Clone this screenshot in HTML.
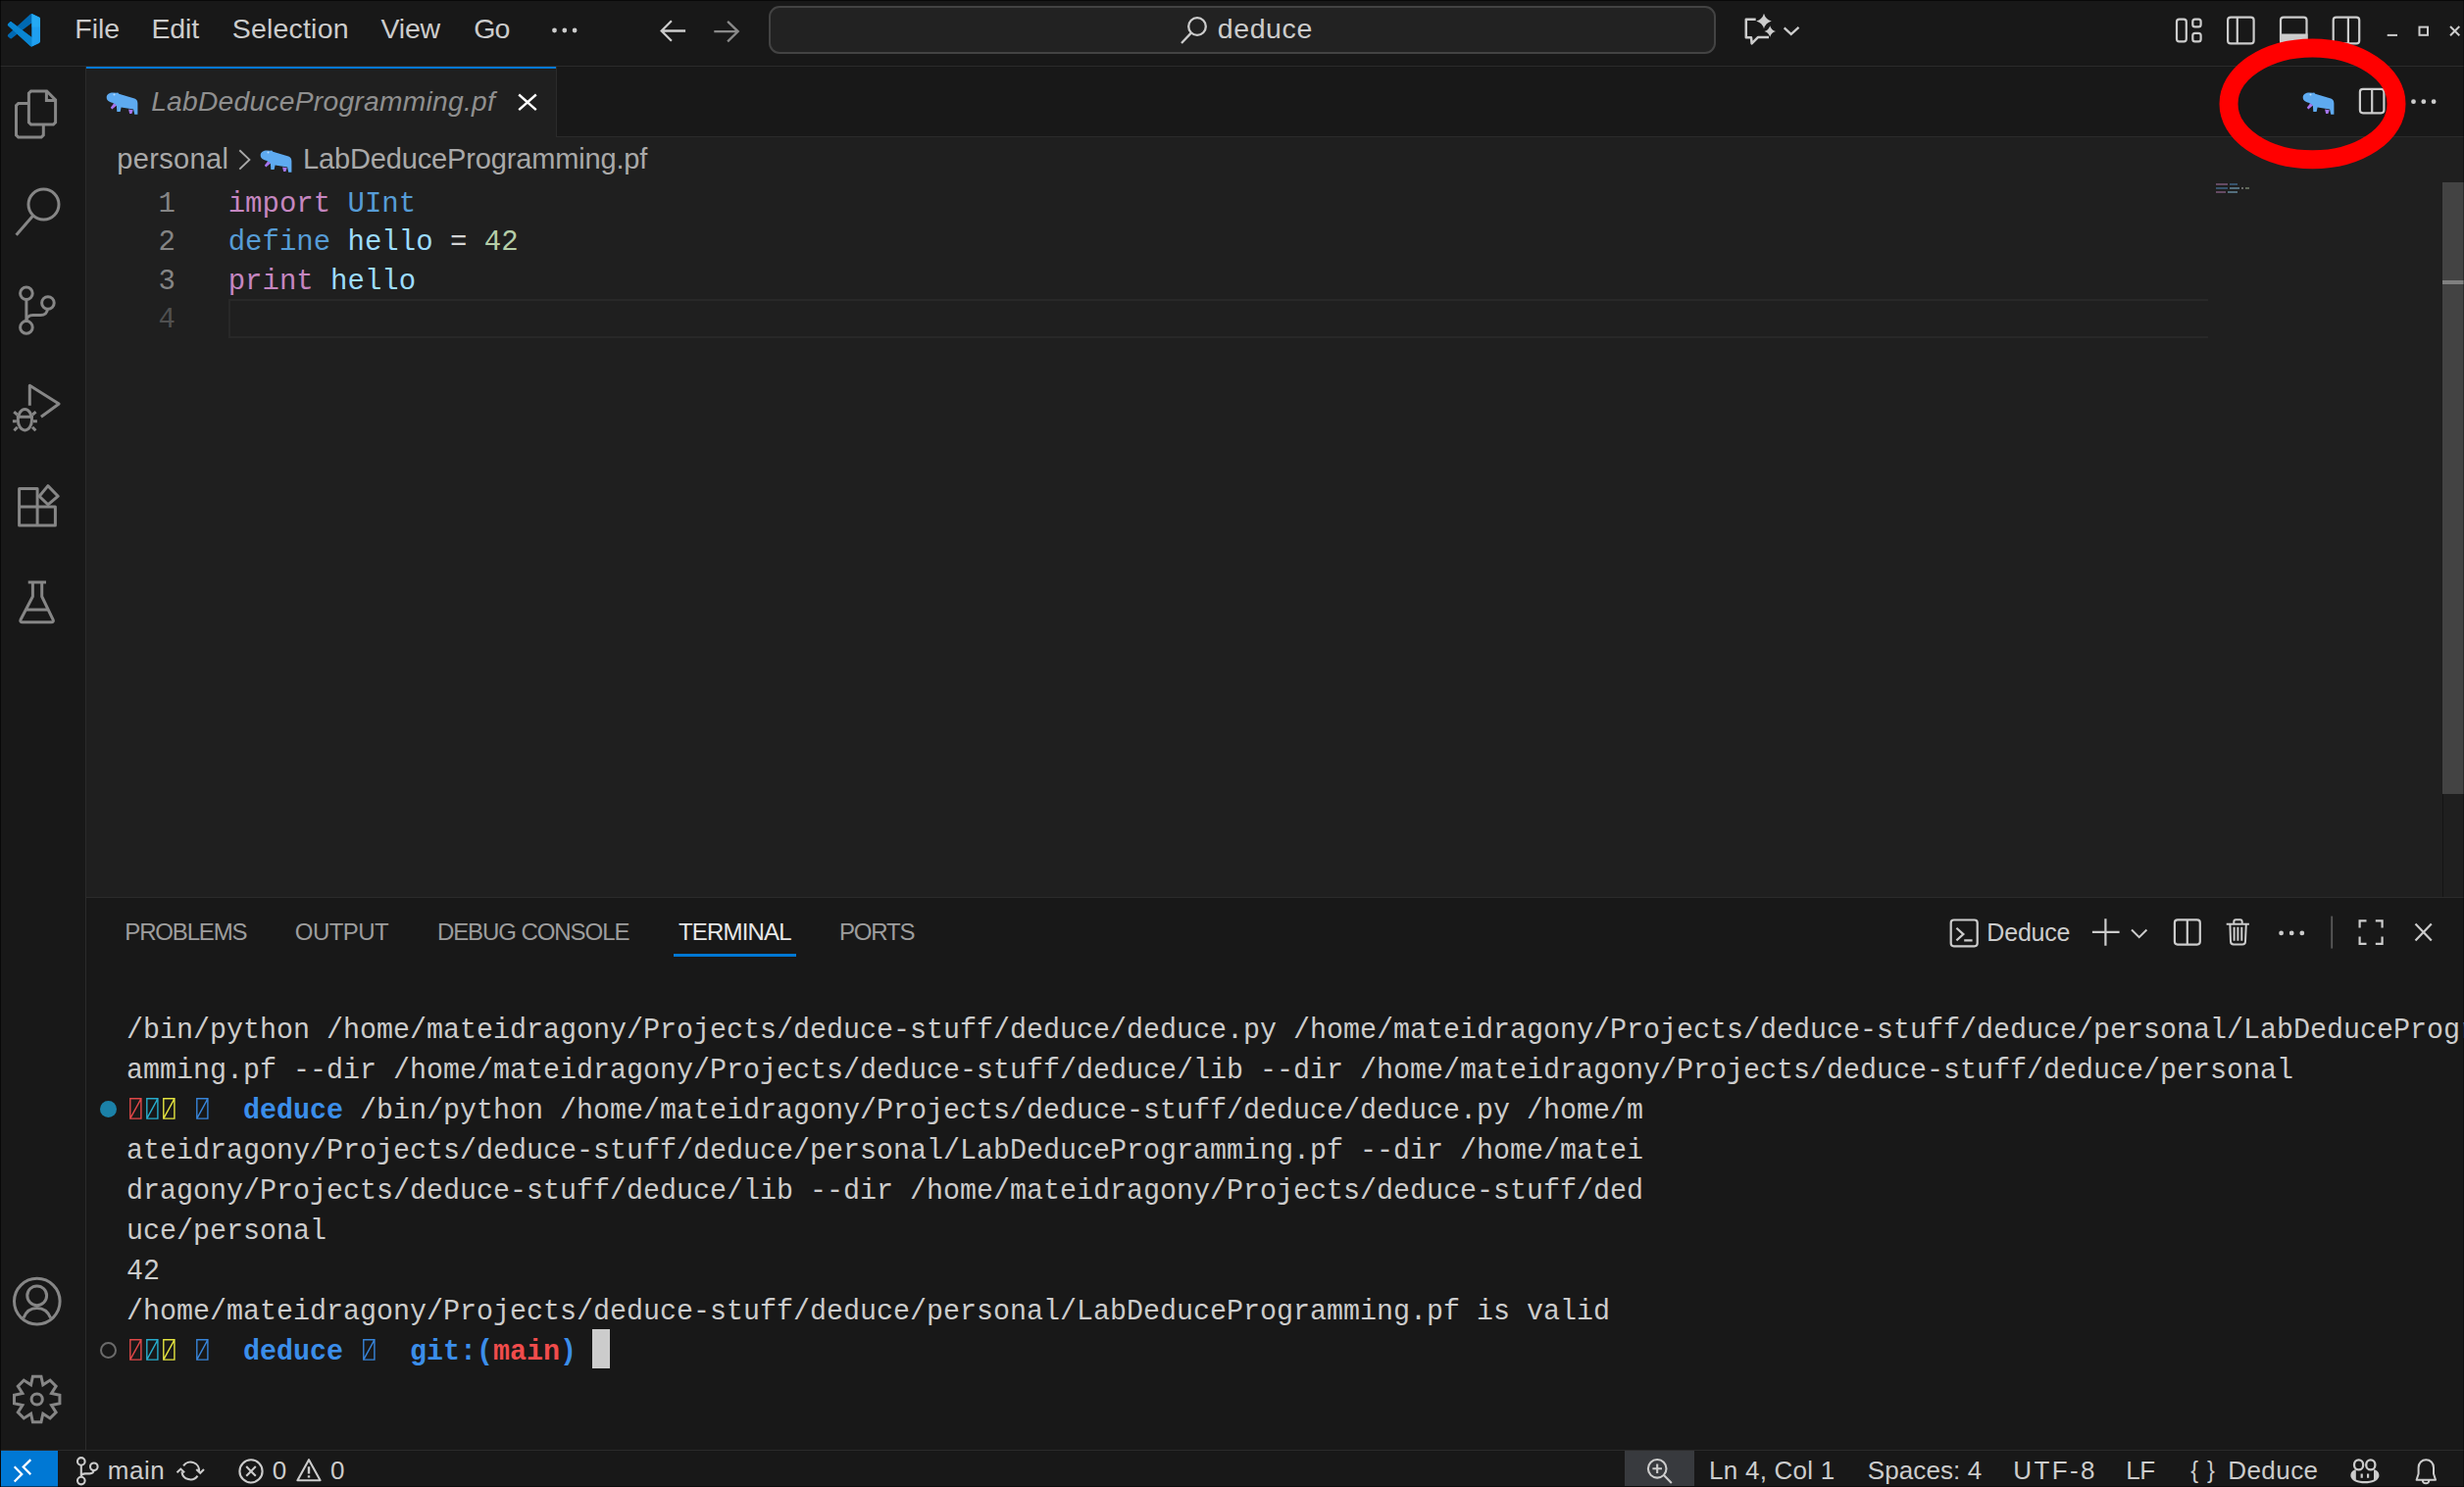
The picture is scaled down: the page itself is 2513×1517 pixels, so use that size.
<!DOCTYPE html>
<html><head><meta charset="utf-8"><title>VS Code</title>
<style>
html,body{margin:0;padding:0;width:2513px;height:1517px;overflow:hidden;background:#181818}
body{position:relative}
.t{position:absolute;white-space:pre;font-family:"Liberation Sans", sans-serif}
.m{font-family:"Liberation Mono", monospace}
.b{position:absolute}
.s{position:absolute;overflow:visible}
</style></head><body>
<div class="b" style="left:0px;top:0px;width:2513px;height:1517px;background:#181818"></div>
<div class="b" style="left:88px;top:139px;width:2425px;height:777px;background:#1f1f1f"></div>
<div class="b" style="left:0px;top:67px;width:2513px;height:1px;background:#2b2b2b"></div>
<div class="b" style="left:87px;top:68px;width:1px;height:1412px;background:#2b2b2b"></div>
<div class="b" style="left:567px;top:139px;width:1946px;height:1px;background:#2b2b2b"></div>
<div class="b" style="left:88px;top:68px;width:479px;height:72px;background:#1f1f1f"></div>
<div class="b" style="left:88px;top:68px;width:479px;height:2px;background:#0078d4"></div>
<div class="b" style="left:567px;top:68px;width:1px;height:71px;background:#2b2b2b"></div>
<div class="b" style="left:88px;top:915px;width:2425px;height:1px;background:#2b2b2b"></div>
<div class="b" style="left:0px;top:1479px;width:2513px;height:1px;background:#2b2b2b"></div>
<svg class="s" style="left:0px;top:8px" width="50" height="48" viewBox="0 8 50 48"><g transform="translate(7.8 14) scale(0.332 0.335)"><path fill="#0069b3" d="M96.5 10.8 75.9.9c-2.4-1.2-5.2-.7-7.1 1.2L29.4 38 12.2 25c-1.6-1.2-3.8-1.1-5.3.2L1.4 30.3c-1.8 1.7-1.8 4.5 0 6.2L16.3 50 1.4 63.6c-1.8 1.7-1.8 4.5 0 6.2l5.5 5c1.5 1.4 3.7 1.5 5.3.2l17.2-13 39.4 35.9c1.9 1.9 4.7 2.4 7.1 1.2l20.6-9.9c2.2-1 3.5-3.2 3.5-5.6V16.4c0-2.4-1.4-4.6-3.5-5.6zM75 72.7 45.1 50 75 27.3v45.4z"/><path fill="#0a86d2" d="M1.4 30.3c-1.8 1.7-1.8 4.5 0 6.2L68.8 97.9c1.9 1.9 4.7 2.4 7.1 1.2L75 72.7 12.2 25c-1.6-1.2-3.8-1.1-5.3.2Z"/><path fill="#1f9ff0" d="M74 .6 75.9.9 96.5 10.8c2.2 1 3.5 3.2 3.5 5.6v67.2c0 2.4-1.4 4.6-3.5 5.6L75.9 99.1 74 99.5Z"/><path fill="#29b3f5" d="M74 .6 75.9.9 96.5 10.8c2.2 1 3.5 3.2 3.5 5.6V40L74 40Z" opacity=".5"/></g></svg>
<div class="t" style="left:76.26px;top:13.80px;font-size:28.5px;line-height:31.84px;color:#cccccc;letter-spacing:-0.006px;">File</div>
<div class="t" style="left:154.56px;top:13.80px;font-size:28.5px;line-height:31.84px;color:#cccccc;letter-spacing:-0.188px;">Edit</div>
<div class="t" style="left:236.71px;top:13.80px;font-size:28.5px;line-height:31.84px;color:#cccccc;letter-spacing:0.2px;">Selection</div>
<div class="t" style="left:388.57px;top:13.80px;font-size:28.5px;line-height:31.84px;color:#cccccc;letter-spacing:-0.239px;">View</div>
<div class="t" style="left:483.27px;top:13.80px;font-size:28.5px;line-height:31.84px;color:#cccccc;letter-spacing:-0.988px;">Go</div>
<svg class="s" style="left:555px;top:22px" width="45" height="18" viewBox="555 22 45 18"><circle cx="565.5" cy="31" r="2.4" fill="#cccccc"/><circle cx="575.8" cy="31" r="2.4" fill="#cccccc"/><circle cx="586.1" cy="31" r="2.4" fill="#cccccc"/></svg>
<svg class="s" style="left:665px;top:12px" width="100" height="40" viewBox="665 12 100 40"><path d="M674.7 31.5H699.1M684.9 21.3 674.7 31.5 684.9 41.7" stroke="#cccccc" stroke-width="2.3" fill="none" /><path d="M728.3 32.1H752.7M742.1 21.9 752.7 32.1 742.1 42.3" stroke="#8a8a8a" stroke-width="2.3" fill="none" /></svg>
<div class="b" style="left:784px;top:6px;width:966px;height:49px;background:#222222;border:2px solid #434343;border-radius:11px;box-sizing:border-box"></div>
<svg class="s" style="left:1195px;top:10px" width="45" height="42" viewBox="1195 10 45 42"><circle cx="1221" cy="27" r="8.8" stroke="#cccccc" stroke-width="2.3" fill="none"/><path d="M1214.8 33.6 1205 44" stroke="#cccccc" stroke-width="2.3" fill="none" /></svg>
<div class="t" style="left:1241.80px;top:14.00px;font-size:28.5px;line-height:31.84px;color:#cccccc;letter-spacing:0.592px;">deduce</div>
<svg class="s" style="left:1770px;top:8px" width="70" height="44" viewBox="1770 8 70 44"><path d="M1790.7 19.7H1780.8V38.2H1786L1786.6 44.4 1793.1 37.9H1804" stroke="#cccccc" stroke-width="2.5" fill="none" stroke-linejoin="round"/><path d="M1799 13.7Q1800.716 19.784 1806.8 21.5Q1800.716 23.216 1799 29.3Q1797.284 23.216 1791.2 21.5Q1797.284 19.784 1799 13.7Z" fill="#cccccc"/><path d="M1805.2 26.2Q1806.476 30.724 1811.0 32Q1806.476 33.276 1805.2 37.8Q1803.924 33.276 1799.4 32Q1803.924 30.724 1805.2 26.2Z" fill="#cccccc"/><path d="M1819.7 28.4 1826.7 34.9 1834.5 27.8" stroke="#cccccc" stroke-width="2.3" fill="none" /></svg>
<svg class="s" style="left:2210px;top:10px" width="210" height="42" viewBox="2210 10 210 42"><rect x="2220" y="19.6" width="9.8" height="22.8" rx="2.6" stroke="#cccccc" stroke-width="2.2" fill="none"/><rect x="2236.3" y="19.6" width="8.3" height="7.8" rx="2.4" stroke="#cccccc" stroke-width="2.2" fill="none"/><rect x="2236.3" y="33.8" width="8.3" height="8.6" rx="2.4" stroke="#cccccc" stroke-width="2.2" fill="none"/><rect x="2272.1" y="17.6" width="26.5" height="26.8" rx="3" stroke="#cccccc" stroke-width="2.2" fill="none"/><path d="M2281.8 17.6V44.4" stroke="#cccccc" stroke-width="2.2" fill="none" /><rect x="2326" y="17.6" width="26.5" height="26.8" rx="3" stroke="#cccccc" stroke-width="2.2" fill="none"/><path d="M2325 34.5H2353.5V42.4a3 3 0 0 1-3 3H2328a3 3 0 0 1-3-3Z" fill="#cccccc"/><rect x="2379.7" y="17.6" width="26.5" height="26.8" rx="3" stroke="#cccccc" stroke-width="2.2" fill="none"/><path d="M2394.9 17.6V44.4" stroke="#cccccc" stroke-width="2.2" fill="none" /></svg>
<svg class="s" style="left:2425px;top:15px" width="88" height="30" viewBox="2425 15 88 30"><path d="M2434.7 35.9H2445" stroke="#cccccc" stroke-width="2" fill="none" /><rect x="2467.5" y="27.6" width="8.5" height="8.2" stroke="#cccccc" stroke-width="2" fill="none"/><path d="M2499 27 2508.3 36.3M2508.3 27 2499 36.3" stroke="#cccccc" stroke-width="2" fill="none" /></svg>
<svg class="s" style="left:0px;top:80px" width="87" height="70" viewBox="0 80 87 70"><path d="M29.4 103.9V95.2L31.6 92.9H47.7L56.6 101.9V124.9L54.4 127.1H31.6L29.4 124.9V103.9" stroke="#868686" stroke-width="3.0" fill="none" stroke-linejoin="miter"/><path d="M47.4 93V102.5H56.6" stroke="#868686" stroke-width="3.0" fill="none" /><path d="M29.4 105.4H18.7L16.5 107.6V137.9L18.7 140.1H42.1L44.3 137.9V127.1" stroke="#868686" stroke-width="3.0" fill="none" /></svg>
<svg class="s" style="left:0px;top:180px" width="87" height="70" viewBox="0 180 87 70"><circle cx="44.5" cy="208.6" r="15.5" stroke="#868686" stroke-width="3.0" fill="none"/><path d="M33.5 220.2 16.6 239.7" stroke="#868686" stroke-width="3.0" fill="none" /></svg>
<svg class="s" style="left:0px;top:280px" width="87" height="70" viewBox="0 280 87 70"><circle cx="26.9" cy="299.3" r="6.3" stroke="#868686" stroke-width="3.0" fill="none"/><circle cx="26.9" cy="333.9" r="6.3" stroke="#868686" stroke-width="3.0" fill="none"/><circle cx="48.9" cy="309" r="6.3" stroke="#868686" stroke-width="3.0" fill="none"/><path d="M26.9 305.6V327.6" stroke="#868686" stroke-width="3.0" fill="none" /><path d="M48.4 315.3C48.4 319 45.5 321.5 41.5 321.5H33.5C29.5 321.5 26.9 323.8 26.9 327.2" stroke="#868686" stroke-width="3.0" fill="none" /></svg>
<svg class="s" style="left:0px;top:380px" width="87" height="70" viewBox="0 380 87 70"><path d="M30.3 413.7V393.2L60.1 412 41.9 425.3" stroke="#868686" stroke-width="3.0" fill="none" stroke-linejoin="round"/><ellipse cx="25.4" cy="428.2" rx="7.1" ry="10.7" stroke="#868686" stroke-width="3.0" fill="none"/><path d="M16.8 425.3H34M14.2 420.2 17.6 423M36.6 420.2 33.2 423M12.9 429.8H16.8M34 429.8H37.9M14.4 439.3 17.8 435.7M36.4 439.3 33 435.7" stroke="#868686" stroke-width="3.0" fill="none" /></svg>
<svg class="s" style="left:0px;top:480px" width="87" height="70" viewBox="0 480 87 70"><path d="M19.6 498.4H38.1V517.1H19.6ZM19.6 517.1V535.9H56.4V517.1H38.1V535.9" stroke="#868686" stroke-width="3.0" fill="none" stroke-linejoin="round"/><path d="M48.9 495.6 59.2 506.2 48.9 514.8 40.1 506.2Z" stroke="#868686" stroke-width="3.0" fill="none" stroke-linejoin="round"/></svg>
<svg class="s" style="left:0px;top:580px" width="87" height="70" viewBox="0 580 87 70"><path d="M28.7 594.1H47M33.4 594.1V608.5L21 632.3C20.3 633.8 21.2 634.8 22.8 634.8H52.4C54 634.8 54.9 633.8 54.2 632.3L42.7 608.5V594.1M26.2 622.1H49.5" stroke="#868686" stroke-width="3.0" fill="none" stroke-linejoin="round"/></svg>
<svg class="s" style="left:0px;top:1290px" width="87" height="70" viewBox="0 1290 87 70"><circle cx="37.8" cy="1327.6" r="23.3" stroke="#868686" stroke-width="3.0" fill="none"/><circle cx="37.7" cy="1321.8" r="9.9" stroke="#868686" stroke-width="3.0" fill="none"/><path d="M24 1344.5C26.5 1338 31 1334.5 37.7 1334.5S49 1338 51.6 1344.5" stroke="#868686" stroke-width="3.0" fill="none" /></svg>
<svg class="s" style="left:0px;top:1395px" width="87" height="67" viewBox="0 1395 87 67"><polygon points="31.58,1412.72 33.44,1404.29 41.96,1404.29 43.82,1412.72 51.10,1408.07 57.13,1414.10 52.48,1421.38 60.91,1423.24 60.91,1431.76 52.48,1433.62 57.13,1440.90 51.10,1446.93 43.82,1442.28 41.96,1450.71 33.44,1450.71 31.58,1442.28 24.30,1446.93 18.27,1440.90 22.92,1433.62 14.49,1431.76 14.49,1423.24 22.92,1421.38 18.27,1414.10 24.30,1408.07" stroke="#868686" stroke-width="3.0" fill="none" stroke-linejoin="miter"/><circle cx="37.7" cy="1427.5" r="5.6" stroke="#868686" stroke-width="3.0" fill="none"/></svg>
<svg class="s" style="left:103.5px;top:90px" width="40" height="30" viewBox="0 0 40 30"><path d="M4.7 9.5C4.7 6.2 7.6 4.6 11.2 4.6L15.3 4.8 16 4.3 17.3 5.8 33.2 10.6C35.3 11.2 36.4 13 36.4 15.5V26.8H33.2L32.1 21.6 19.6 19.4 18.6 24.1H15.3L14.9 18.3C13.6 16.6 12.5 15.9 10.5 14.8 7.5 13.8 4.7 12.5 4.7 9.5Z" fill="#5eaaf0"/><path d="M12.1 15.4 15 17.5 10.3 21.6 8.8 19.7Z" fill="#a674ef"/><path d="M27.1 21.6 31.8 22.3 30.4 25.9 28.2 25.9Z" fill="#a674ef"/><circle cx="12.5" cy="6.6" r="1" fill="#b8dcff"/></svg>
<div class="t" style="left:154.13px;top:87.67px;font-size:28.2px;line-height:31.51px;color:#8f8f8f;font-style:italic;letter-spacing:0.271px;">LabDeduceProgramming.pf</div>
<svg class="s" style="left:520px;top:88px" width="36" height="32" viewBox="520 88 36 32"><path d="M529.2 96.5 546.8 112.2M546.8 96.5 529.2 112.2" stroke="#ffffff" stroke-width="2.4" fill="none" /></svg>
<svg class="s" style="left:2343.5px;top:90px" width="40" height="30" viewBox="0 0 40 30"><path d="M4.7 9.5C4.7 6.2 7.6 4.6 11.2 4.6L15.3 4.8 16 4.3 17.3 5.8 33.2 10.6C35.3 11.2 36.4 13 36.4 15.5V26.8H33.2L32.1 21.6 19.6 19.4 18.6 24.1H15.3L14.9 18.3C13.6 16.6 12.5 15.9 10.5 14.8 7.5 13.8 4.7 12.5 4.7 9.5Z" fill="#5eaaf0"/><path d="M12.1 15.4 15 17.5 10.3 21.6 8.8 19.7Z" fill="#a674ef"/><path d="M27.1 21.6 31.8 22.3 30.4 25.9 28.2 25.9Z" fill="#a674ef"/><circle cx="12.5" cy="6.6" r="1" fill="#b8dcff"/></svg>
<svg class="s" style="left:2395px;top:82px" width="50" height="43" viewBox="2395 82 50 43"><rect x="2406.9" y="90.8" width="24.5" height="24.5" rx="3" stroke="#cccccc" stroke-width="2.2" fill="none"/><path d="M2419.2 90.8V115.3" stroke="#cccccc" stroke-width="2.2" fill="none" /></svg>
<svg class="s" style="left:2450px;top:95px" width="45" height="20" viewBox="2450 95 45 20"><circle cx="2461.5" cy="103.7" r="2.4" fill="#cccccc"/><circle cx="2471.8" cy="103.7" r="2.4" fill="#cccccc"/><circle cx="2482.1" cy="103.7" r="2.4" fill="#cccccc"/></svg>
<div class="t" style="left:119.33px;top:146.25px;font-size:29px;line-height:32.40px;color:#a9a9a9;letter-spacing:0.324px;">personal</div>
<svg class="s" style="left:236px;top:148px" width="26" height="32" viewBox="236 148 26 32"><path d="M244.3 153.2 254.4 162.9 244.3 172.6" stroke="#a9a9a9" stroke-width="1.9" fill="none" /></svg>
<svg class="s" style="left:260.5px;top:149px" width="40" height="30" viewBox="0 0 40 30"><path d="M4.7 9.5C4.7 6.2 7.6 4.6 11.2 4.6L15.3 4.8 16 4.3 17.3 5.8 33.2 10.6C35.3 11.2 36.4 13 36.4 15.5V26.8H33.2L32.1 21.6 19.6 19.4 18.6 24.1H15.3L14.9 18.3C13.6 16.6 12.5 15.9 10.5 14.8 7.5 13.8 4.7 12.5 4.7 9.5Z" fill="#5eaaf0"/><path d="M12.1 15.4 15 17.5 10.3 21.6 8.8 19.7Z" fill="#a674ef"/><path d="M27.1 21.6 31.8 22.3 30.4 25.9 28.2 25.9Z" fill="#a674ef"/><circle cx="12.5" cy="6.6" r="1" fill="#b8dcff"/></svg>
<div class="t" style="left:309.02px;top:146.25px;font-size:29px;line-height:32.40px;color:#a9a9a9;letter-spacing:-0.15px;">LabDeduceProgramming.pf</div>
<div class="t m" style="left:139px;width:40px;text-align:right;top:193.06px;font-size:29px;line-height:32.85px;color:#858585">1</div>
<div class="t m" style="left:139px;width:40px;text-align:right;top:232.36px;font-size:29px;line-height:32.85px;color:#858585">2</div>
<div class="t m" style="left:139px;width:40px;text-align:right;top:271.66px;font-size:29px;line-height:32.85px;color:#858585">3</div>
<div class="t m" style="left:139px;width:40px;text-align:right;top:310.96px;font-size:29px;line-height:32.85px;color:#505050">4</div>
<div class="b" style="left:233px;top:304.5px;width:2019px;height:40px;border:2px solid #282828;border-right:none;box-sizing:border-box"></div>
<div class="t m" style="left:232.70px;top:192.96px;font-size:29px;line-height:32.85px;color:#cccccc;"><span style="color:#c586c0">import</span> <span style="color:#569cd6">UInt</span></div>
<div class="t m" style="left:232.70px;top:232.26px;font-size:29px;line-height:32.85px;color:#cccccc;"><span style="color:#569cd6">define</span> <span style="color:#9cdcfe">hello</span> <span style="color:#d4d4d4">=</span> <span style="color:#b5cea8">42</span></div>
<div class="t m" style="left:232.70px;top:271.56px;font-size:29px;line-height:32.85px;color:#cccccc;"><span style="color:#c586c0">print</span> <span style="color:#9cdcfe">hello</span></div>
<div class="b" style="left:2260.0px;top:186.6px;width:11.7px;height:2.8px;background:#c586c0;opacity:.42"></div>
<div class="b" style="left:2273.9px;top:186.6px;width:7.8px;height:2.8px;background:#569cd6;opacity:.42"></div>
<div class="b" style="left:2260.0px;top:190.6px;width:11.7px;height:2.8px;background:#569cd6;opacity:.42"></div>
<div class="b" style="left:2273.9px;top:190.6px;width:9.9px;height:2.8px;background:#9cdcfe;opacity:.42"></div>
<div class="b" style="left:2285.8px;top:190.6px;width:1.9px;height:2.8px;background:#d4d4d4;opacity:.42"></div>
<div class="b" style="left:2289.9px;top:190.6px;width:3.9px;height:2.8px;background:#b5cea8;opacity:.42"></div>
<div class="b" style="left:2260.0px;top:194.6px;width:10.2px;height:2.8px;background:#c586c0;opacity:.42"></div>
<div class="b" style="left:2271.9px;top:194.6px;width:10.0px;height:2.8px;background:#9cdcfe;opacity:.42"></div>
<div class="b" style="left:2491px;top:186px;width:22px;height:624px;background:#434343"></div>
<div class="b" style="left:2491px;top:286px;width:22px;height:3.5px;background:#808080"></div>
<div class="b" style="left:2491px;top:810px;width:1px;height:105px;background:#141414"></div>
<div class="t" style="left:127.33px;top:937.87px;font-size:24px;line-height:26.81px;color:#9d9d9d;letter-spacing:-1.172px;">PROBLEMS</div>
<div class="t" style="left:300.86px;top:937.87px;font-size:24px;line-height:26.81px;color:#9d9d9d;letter-spacing:-0.595px;">OUTPUT</div>
<div class="t" style="left:445.93px;top:937.87px;font-size:24px;line-height:26.81px;color:#9d9d9d;letter-spacing:-1.073px;">DEBUG CONSOLE</div>
<div class="t" style="left:691.96px;top:937.87px;font-size:24px;line-height:26.81px;color:#e7e7e7;letter-spacing:-0.816px;">TERMINAL</div>
<div class="t" style="left:855.93px;top:937.87px;font-size:24px;line-height:26.81px;color:#9d9d9d;letter-spacing:-1.151px;">PORTS</div>
<div class="b" style="left:687px;top:973px;width:125px;height:3px;background:#0078d4"></div>
<svg class="s" style="left:1980px;top:930px" width="520" height="42" viewBox="1980 930 520 42"><rect x="1989.7" y="938.5" width="27" height="26.8" rx="3" stroke="#cccccc" stroke-width="2.2" fill="none"/><path d="M1995.4 946.7 2002.4 953.1 1995.4 959.4M2003.2 959.4H2011.6" stroke="#cccccc" stroke-width="2.2" fill="none" /><path d="M2147.4 937.3V964.7M2133.9 950.8H2161.6" stroke="#cccccc" stroke-width="2.2" fill="none" /><path d="M2174 948.5 2181.7 956.2 2189.4 948.5" stroke="#cccccc" stroke-width="2.0" fill="none" /><rect x="2217.9" y="938.4" width="25.9" height="25.2" rx="3" stroke="#cccccc" stroke-width="2.2" fill="none"/><path d="M2230.8 938.4V963.6" stroke="#cccccc" stroke-width="2.2" fill="none" /><path d="M2270.7 942.7H2293.9M2278.3 942.7V940.2C2278.3 938.9 2279.1 938.3 2280.3 938.3H2284.7C2285.9 938.3 2286.7 938.9 2286.7 940.2V942.7M2274.4 942.7 2275 960.6C2275.1 962.5 2276.2 963.4 2278 963.4H2287C2288.8 963.4 2289.9 962.5 2290 960.6L2290.8 942.7M2278.6 945.8V959.7M2282.4 945.8V959.7M2286.3 945.8V959.7" stroke="#cccccc" stroke-width="2.0" fill="none" /><circle cx="2326.6" cy="951.9" r="2.4" fill="#cccccc"/><circle cx="2337.2" cy="951.9" r="2.4" fill="#cccccc"/><circle cx="2347.8" cy="951.9" r="2.4" fill="#cccccc"/><path d="M2378.2 934.6V967.6" stroke="#5a5a5a" stroke-width="1.8" fill="none" /><path d="M2406.6 946.5V939.3H2413.5M2422.8 939.3H2429.6V946.5M2429.6 955.6V962.8H2422.8M2413.5 962.8H2406.6V955.6" stroke="#cccccc" stroke-width="2.2" fill="none" /><path d="M2463.5 942.5 2479.8 959.4M2479.8 942.5 2463.5 959.4" stroke="#cccccc" stroke-width="2.2" fill="none" /></svg>
<div class="t" style="left:2026.35px;top:938.17px;font-size:25px;line-height:27.93px;color:#cccccc;letter-spacing:-0.202px;">Deduce</div>
<div class="t m" style="left:129.00px;top:1035.51px;font-size:28.337px;line-height:32.10px;color:#cccccc;transform:scaleY(1.06);transform-origin:0 23.59px;">/bin/python /home/mateidragony/Projects/deduce-stuff/deduce/deduce.py /home/mateidragony/Projects/deduce-stuff/deduce/personal/LabDeduceProgramming.pf</div>
<div class="t m" style="left:129.00px;top:1076.51px;font-size:28.337px;line-height:32.10px;color:#cccccc;transform:scaleY(1.06);transform-origin:0 23.59px;">amming.pf --dir /home/mateidragony/Projects/deduce-stuff/deduce/lib --dir /home/mateidragony/Projects/deduce-stuff/deduce/personal</div>
<div class="t m" style="left:129.00px;top:1158.51px;font-size:28.337px;line-height:32.10px;color:#cccccc;transform:scaleY(1.06);transform-origin:0 23.59px;">ateidragony/Projects/deduce-stuff/deduce/personal/LabDeduceProgramming.pf --dir /home/matei</div>
<div class="t m" style="left:129.00px;top:1199.51px;font-size:28.337px;line-height:32.10px;color:#cccccc;transform:scaleY(1.06);transform-origin:0 23.59px;">dragony/Projects/deduce-stuff/deduce/lib --dir /home/mateidragony/Projects/deduce-stuff/ded</div>
<div class="t m" style="left:129.00px;top:1240.51px;font-size:28.337px;line-height:32.10px;color:#cccccc;transform:scaleY(1.06);transform-origin:0 23.59px;">uce/personal</div>
<div class="t m" style="left:129.00px;top:1281.51px;font-size:28.337px;line-height:32.10px;color:#cccccc;transform:scaleY(1.06);transform-origin:0 23.59px;">42</div>
<div class="t m" style="left:129.00px;top:1322.51px;font-size:28.337px;line-height:32.10px;color:#cccccc;transform:scaleY(1.06);transform-origin:0 23.59px;">/home/mateidragony/Projects/deduce-stuff/deduce/personal/LabDeduceProgramming.pf is valid</div>
<div class="t m" style="left:129.00px;top:1117.51px;font-size:28.337px;line-height:32.10px;color:#cccccc;transform:scaleY(1.06);transform-origin:0 23.59px;">       <b style="color:#3b8eea">deduce</b> /bin/python /home/mateidragony/Projects/deduce-stuff/deduce/deduce.py /home/m</div>
<svg class="s" style="left:131.70px;top:1119.50px" width="13" height="22" viewBox="0 0 13 22"><path d="M.8 .8H11.9V21.1H.8ZM.8 21.1 11.9 .8" stroke="#f14c4c" stroke-width="1.4" fill="none" opacity=".92"/></svg>
<svg class="s" style="left:148.70px;top:1119.50px" width="13" height="22" viewBox="0 0 13 22"><path d="M.8 .8H11.9V21.1H.8ZM.8 21.1 11.9 .8" stroke="#29b8db" stroke-width="1.4" fill="none" opacity=".92"/></svg>
<svg class="s" style="left:165.71px;top:1119.50px" width="13" height="22" viewBox="0 0 13 22"><path d="M.8 .8H11.9V21.1H.8ZM.8 21.1 11.9 .8" stroke="#f5f543" stroke-width="1.4" fill="none" opacity=".92"/></svg>
<svg class="s" style="left:199.72px;top:1119.50px" width="13" height="22" viewBox="0 0 13 22"><path d="M.8 .8H11.9V21.1H.8ZM.8 21.1 11.9 .8" stroke="#3b8eea" stroke-width="1.4" fill="none" opacity=".92"/></svg>
<div class="b" style="left:101.6px;top:1122.5px;width:17px;height:17px;border-radius:50%;background:#1b81a8"></div>
<div class="t m" style="left:129.00px;top:1363.51px;font-size:28.337px;line-height:32.10px;color:#cccccc;transform:scaleY(1.06);transform-origin:0 23.59px;">       <b style="color:#3b8eea">deduce</b>    <b style="color:#3b8eea">git:(</b><b style="color:#f14c4c">main</b><b style="color:#3b8eea">)</b> </div>
<svg class="s" style="left:131.70px;top:1365.50px" width="13" height="22" viewBox="0 0 13 22"><path d="M.8 .8H11.9V21.1H.8ZM.8 21.1 11.9 .8" stroke="#f14c4c" stroke-width="1.4" fill="none" opacity=".92"/></svg>
<svg class="s" style="left:148.70px;top:1365.50px" width="13" height="22" viewBox="0 0 13 22"><path d="M.8 .8H11.9V21.1H.8ZM.8 21.1 11.9 .8" stroke="#29b8db" stroke-width="1.4" fill="none" opacity=".92"/></svg>
<svg class="s" style="left:165.71px;top:1365.50px" width="13" height="22" viewBox="0 0 13 22"><path d="M.8 .8H11.9V21.1H.8ZM.8 21.1 11.9 .8" stroke="#f5f543" stroke-width="1.4" fill="none" opacity=".92"/></svg>
<svg class="s" style="left:199.72px;top:1365.50px" width="13" height="22" viewBox="0 0 13 22"><path d="M.8 .8H11.9V21.1H.8ZM.8 21.1 11.9 .8" stroke="#3b8eea" stroke-width="1.4" fill="none" opacity=".92"/></svg>
<svg class="s" style="left:369.77px;top:1365.50px" width="13" height="22" viewBox="0 0 13 22"><path d="M.8 .8H11.9V21.1H.8ZM.8 21.1 11.9 .8" stroke="#3b8eea" stroke-width="1.4" fill="none" opacity=".92"/></svg>
<div class="b" style="left:102px;top:1369px;width:17px;height:17px;border-radius:50%;border:2px solid #6b6b6b;box-sizing:border-box"></div>
<div class="b" style="left:604px;top:1356px;width:18px;height:40px;background:#cccccc"></div>
<div class="b" style="left:1px;top:1480px;width:58px;height:37px;background:#0078d4"></div>
<svg class="s" style="left:0px;top:1480px" width="60" height="37" viewBox="0 1480 60 37"><path d="M14.7 1496.3 22.3 1503.9 14.7 1511.5M31.3 1489.1 23.7 1496.6 31.3 1504.1" stroke="#ffffff" stroke-width="2.2" fill="none" /></svg>
<svg class="s" style="left:60px;top:1480px" width="50" height="37" viewBox="60 1480 50 37"><circle cx="82.8" cy="1490.9" r="3.8" stroke="#cccccc" stroke-width="2.1" fill="none"/><circle cx="82.8" cy="1510.6" r="3.8" stroke="#cccccc" stroke-width="2.1" fill="none"/><circle cx="95.8" cy="1496.3" r="3.8" stroke="#cccccc" stroke-width="2.1" fill="none"/><path d="M82.8 1494.7V1506.8M95.4 1500.1C95.4 1502 94 1503.4 91.5 1503.4H87C84.5 1503.4 82.8 1504.6 82.8 1506.6" stroke="#cccccc" stroke-width="2.1" fill="none" /></svg>
<div class="t" style="left:109.87px;top:1485.96px;font-size:26px;line-height:29.05px;color:#cccccc;letter-spacing:0.487px;">main</div>
<svg class="s" style="left:170px;top:1480px" width="42" height="37" viewBox="170 1480 42 37"><path d="M187.1 1495.4A8.8 8.8 0 0 1 203.1 1501.3M201.5 1505.6A8.8 8.8 0 0 1 185.5 1501.3" stroke="#cccccc" stroke-width="2.1" fill="none" /><path d="M200.3 1499 204.2 1502.7 208 1498.9M180.5 1502.3 184.3 1498.6 188.1 1502.3" stroke="#cccccc" stroke-width="2.1" fill="none" /></svg>
<svg class="s" style="left:230px;top:1480px" width="45" height="37" viewBox="230 1480 45 37"><circle cx="256" cy="1500.9" r="11.6" stroke="#cccccc" stroke-width="2.1" fill="none"/><path d="M251.2 1496.1 260.8 1505.7M260.8 1496.1 251.2 1505.7" stroke="#cccccc" stroke-width="2.1" fill="none" /></svg>
<div class="t" style="left:277.68px;top:1485.96px;font-size:26px;line-height:29.05px;color:#cccccc;letter-spacing:0px;">0</div>
<svg class="s" style="left:295px;top:1480px" width="40" height="37" viewBox="295 1480 40 37"><path d="M315 1489.2 326.6 1510.2H303.4Z" stroke="#cccccc" stroke-width="2.1" fill="none" stroke-linejoin="round"/><path d="M315 1496.2V1503.4M315 1505.3V1507.6" stroke="#cccccc" stroke-width="2.4" fill="none" /></svg>
<div class="t" style="left:336.98px;top:1485.96px;font-size:26px;line-height:29.05px;color:#cccccc;letter-spacing:0px;">0</div>
<div class="b" style="left:1657px;top:1480px;width:71px;height:36px;background:#383a3e"></div>
<svg class="s" style="left:1660px;top:1480px" width="60" height="37" viewBox="1660 1480 60 37"><circle cx="1690.2" cy="1498.3" r="9.3" stroke="#cccccc" stroke-width="2.1" fill="none"/><path d="M1685.4 1498.3H1695M1690.2 1493.6V1503M1697 1505.1 1704.8 1512.9" stroke="#cccccc" stroke-width="2.1" fill="none" /></svg>
<div class="t" style="left:1743.07px;top:1485.96px;font-size:26px;line-height:29.05px;color:#cccccc;letter-spacing:0.246px;">Ln 4, Col 1</div>
<div class="t" style="left:1904.72px;top:1485.96px;font-size:26px;line-height:29.05px;color:#cccccc;letter-spacing:0.102px;">Spaces: 4</div>
<div class="t" style="left:2053.29px;top:1485.96px;font-size:26px;line-height:29.05px;color:#cccccc;letter-spacing:2.394px;">UTF-8</div>
<div class="t" style="left:2168.37px;top:1485.96px;font-size:26px;line-height:29.05px;color:#cccccc;letter-spacing:-0.668px;">LF</div>
<div class="t" style="left:2272.17px;top:1485.96px;font-size:26px;line-height:29.05px;color:#cccccc;letter-spacing:0.454px;">Deduce</div>
<div class="t" style="left:2234.21px;top:1487.33px;font-size:23.5px;line-height:26.25px;color:#cccccc;letter-spacing:8.917px;">{}</div>
<svg class="s" style="left:2390px;top:1482px" width="110" height="35" viewBox="2390 1482 110 35"><ellipse cx="2405.6" cy="1494.4" rx="4.6" ry="5" stroke="#cccccc" stroke-width="2.3" fill="none"/><ellipse cx="2417.8" cy="1494.4" rx="4.6" ry="5" stroke="#cccccc" stroke-width="2.3" fill="none"/><path d="M2401.2 1499.6C2398.2 1501 2397 1503.5 2397.4 1506.3 2398.5 1510.8 2404.5 1513.3 2411.9 1513.3S2425.3 1510.8 2426.4 1506.3C2426.8 1503.5 2425.6 1501 2422.6 1499.6L2421 1499.3V1509.5C2418.5 1510.6 2415.3 1511 2411.9 1511S2405.3 1510.6 2402.8 1509.5V1499.3Z" fill="#cccccc"/><path d="M2408.7 1503.4V1507.8M2415.1 1503.4V1507.8" stroke="#cccccc" stroke-width="2.2" fill="none" /><path d="M2464.6 1509.8H2484L2482 1503.5V1497.2C2482 1492.5 2478.6 1489.3 2474.3 1489.3S2466.6 1492.5 2466.6 1497.2V1503.5ZM2470.8 1510.5C2471 1512.2 2472.5 1513.3 2474.1 1513.3S2477.2 1512.2 2477.4 1510.5" stroke="#cccccc" stroke-width="2.0" fill="none" stroke-linejoin="round"/></svg>
<div class="b" style="left:0px;top:0px;width:2513px;height:1px;background:rgba(0,0,0,.6)"></div>
<div class="b" style="left:0px;top:0px;width:1px;height:1517px;background:rgba(0,0,0,.6)"></div>
<div class="b" style="left:0px;top:1516px;width:2513px;height:1px;background:rgba(0,0,0,.5)"></div>
<div class="b" style="left:2512px;top:0px;width:1px;height:1517px;background:rgba(0,0,0,.35)"></div>
<svg class="s" style="left:2240px;top:25px" width="240" height="165" viewBox="2240 25 240 165"><ellipse cx="2358.5" cy="105.9" rx="85.5" ry="56.9" stroke="#ff0000" stroke-width="19" fill="none"/></svg>
</body></html>
